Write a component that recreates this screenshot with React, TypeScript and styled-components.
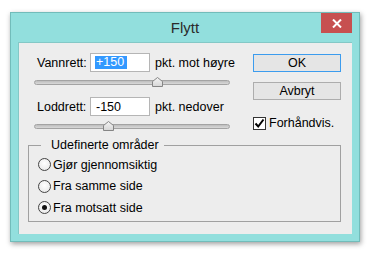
import styled, { createGlobalStyle } from "styled-components";

const GlobalStyle = createGlobalStyle`
  html, body {
    margin: 0;
    padding: 0;
    background: #ffffff;
  }
  body {
    font-family: "Liberation Sans", Arial, sans-serif;
    font-size: 12.5px;
    color: #000;
  }
`;

const radios = [
  { label: "Gjør gjennomsiktig", checked: false },
  { label: "Fra samme side", checked: false },
  { label: "Fra motsatt side", checked: true },
];

const Slider = ({ value }: { value: number }) => (
  <SliderBox>
    <Track />
    <Thumb style={{ left: `calc(${value * 100}% - 5px)` }}>
      <svg width="11" height="10" viewBox="0 0 11 10">
        <defs>
          <linearGradient id="thumbfill" x1="0" y1="0" x2="0" y2="1">
            <stop offset="0" stopColor="#f4f4f4" />
            <stop offset="1" stopColor="#d6d6d6" />
          </linearGradient>
        </defs>
        <polygon
          points="0.5,4.5 5.5,0.5 10.5,4.5 10.5,9.5 0.5,9.5"
          fill="url(#thumbfill)"
          stroke="#858585"
        />
      </svg>
    </Thumb>
  </SliderBox>
);

const App = () => {
  return (
    <Page>
      <GlobalStyle />
      <Window>
        <TitleBar>
          <span />
          <Title>Flytt</Title>
          <CloseButton>
            <svg width="10" height="9" viewBox="0 0 10 9">
              <path d="M1 0.5 L9 8.5 M9 0.5 L1 8.5" stroke="#fff" strokeWidth="2" />
            </svg>
          </CloseButton>
        </TitleBar>
        <Content>
          <TopSection>
            <LeftColumn>
              <FieldRow>
                <Label>Vannrett:</Label>
                <Field>
                  <Selected>+150</Selected>
                </Field>
                <Unit>pkt. mot høyre</Unit>
              </FieldRow>
              <Slider value={0.627} />
              <FieldRow $gap>
                <Label>Loddrett:</Label>
                <Field>-150</Field>
                <Unit>pkt. nedover</Unit>
              </FieldRow>
              <Slider value={0.375} />
            </LeftColumn>
            <RightColumn>
              <Button $primary>OK</Button>
              <Button>Avbryt</Button>
              <CheckRow>
                <CheckBox>
                  <svg width="11" height="11" viewBox="0 0 11 11">
                    <path
                      d="M1.5 5.5 L4.2 8.5 L9.5 1.5"
                      fill="none"
                      stroke="#000"
                      strokeWidth="2"
                    />
                  </svg>
                </CheckBox>
                <span>Forhåndvis.</span>
              </CheckRow>
            </RightColumn>
          </TopSection>
          <GroupBox>
            <Legend>Udefinerte områder</Legend>
            {radios.map((r) => (
              <RadioRow key={r.label}>
                <Radio $checked={r.checked} />
                <span>{r.label}</span>
              </RadioRow>
            ))}
          </GroupBox>
        </Content>
      </Window>
    </Page>
  );
};

export default App;

const Page = styled.div`
  padding: 12px 0 0 10px;
  width: 369px;
  height: 255px;
  box-sizing: border-box;
`;

const Window = styled.div`
  width: 350px;
  box-sizing: border-box;
  background: #92dfdd;
  border: 1px solid #72bcba;
  box-shadow: 1px 2px 5px rgba(0, 0, 0, 0.38);
  padding: 0 7px 7px 7px;
`;

const TitleBar = styled.div`
  height: 29px;
  display: grid;
  grid-template-columns: 1fr auto 1fr;
  align-items: start;
`;

const Title = styled.div`
  font-size: 15px;
  line-height: 29px;
  color: #2b2b2b;
`;

const CloseButton = styled.div`
  justify-self: end;
  width: 31px;
  height: 20px;
  background: #c75050;
  display: flex;
  align-items: center;
  justify-content: center;
`;

const Content = styled.div`
  background: #ededed;
  height: 192px;
  box-sizing: border-box;
  padding: 10px 11px 0 10px;
  border: 1px solid #84c8c6;
  border-width: 1px 0 0 1px;
  display: flex;
  flex-direction: column;
`;

const TopSection = styled.div`
  display: flex;
  justify-content: space-between;
`;

const LeftColumn = styled.div`
  width: 212px;
  display: flex;
  flex-direction: column;
`;

const FieldRow = styled.div<{ $gap?: boolean }>`
  display: flex;
  align-items: center;
  height: 19px;
  margin-top: ${(p) => (p.$gap ? "10px" : "0")};
  margin-left: 8px;
`;

const Label = styled.div`
  width: 53px;
`;

const Field = styled.div`
  width: 60px;
  height: 19px;
  box-sizing: border-box;
  background: #fff;
  border: 1px solid #b5b5b5;
  padding-left: 5px;
  display: flex;
  align-items: center;
`;

const Selected = styled.span`
  background: #3399ff;
  color: #fff;
  line-height: 13px;
  padding: 0 3px 0 1px;
  margin-left: -1px;
`;

const Unit = styled.div`
  margin-left: 5px;
`;

const SliderBox = styled.div`
  position: relative;
  width: 196px;
  height: 10px;
  margin: 5px 0 0 5px;
`;

const Track = styled.div`
  position: absolute;
  top: 3px;
  left: 0;
  right: 0;
  height: 5px;
  box-sizing: border-box;
  border: 1px solid #a3a3a3;
  border-radius: 3px;
  background: linear-gradient(#bdbdbd, #d9d9d9);
`;

const Thumb = styled.div`
  position: absolute;
  top: 0;
  width: 11px;
  height: 10px;
  display: flex;
`;

const RightColumn = styled.div`
  width: 88px;
  margin-top: 1px;
  display: flex;
  flex-direction: column;
`;

const Button = styled.div<{ $primary?: boolean }>`
  height: 18px;
  box-sizing: border-box;
  border: 1px solid ${(p) => (p.$primary ? "#3c9cee" : "#adadad")};
  background: #e5e5e5;
  display: flex;
  align-items: center;
  justify-content: center;
  margin-bottom: 10px;
`;

const CheckRow = styled.div`
  display: flex;
  align-items: center;
  gap: 3px;
  margin-top: 6px;
`;

const CheckBox = styled.div`
  width: 13px;
  height: 13px;
  box-sizing: border-box;
  border: 1px solid #333;
  background: #fff;
  display: flex;
  align-items: center;
  justify-content: center;
`;

const GroupBox = styled.fieldset`
  margin: 7px 0 0 -1px;
  padding: 1px 0 2px 9px;
  border: 1px solid #a0a0a0;
  display: flex;
  flex-direction: column;
`;

const Legend = styled.legend`
  margin-left: 3px;
  padding: 0 5px 0 10px;
  line-height: 15px;
`;

const RadioRow = styled.div`
  display: flex;
  align-items: center;
  height: 21.5px;
  gap: 2px;
`;

const Radio = styled.div<{ $checked?: boolean }>`
  width: 13px;
  height: 13px;
  box-sizing: border-box;
  border-radius: 50%;
  border: 1px solid #444;
  background: radial-gradient(circle at 50% 40%, #ffffff, #e4e4e4);
  display: flex;
  align-items: center;
  justify-content: center;
  &::after {
    content: "";
    display: ${(p) => (p.$checked ? "block" : "none")};
    width: 5px;
    height: 5px;
    border-radius: 50%;
    background: #111;
  }
`;
